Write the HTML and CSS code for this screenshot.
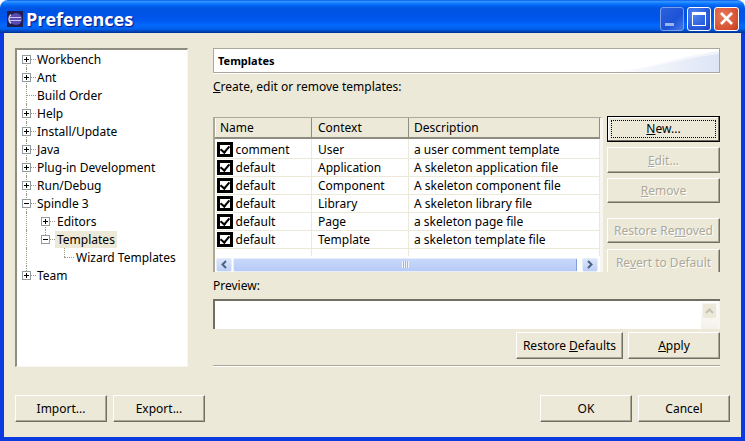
FILE: index.html
```html
<!DOCTYPE html>
<html>
<head>
    <title>Preferences</title>
    <link rel="stylesheet" href="styles.css">
</head>
<body>
    <div class="window">
        <div class="titlebar">
            <svg class="app-icon" width="16" height="16" viewBox="0 0 16 16">
                <rect width="16" height="16" fill="#231c4e"/>
                <circle cx="9" cy="8" r="6" fill="#5a4cb0"/>
                <path d="M4 3.500a6 6 0 0 0 0 9" fill="none" stroke="#d8d0f5" stroke-width="1.500"/>
                <path d="M3 6.500h11M3 9.500h11" stroke="#c9c2f0" stroke-width="1"/>
            </svg>
            <span class="title">Preferences</span>
            <div class="caption-buttons">
                <span class="cap cap-min"><i></i></span>
                <span class="cap cap-max"><i></i></span>
                <span class="cap cap-close">
                    <svg width="15" height="15" viewBox="0 0 15 15"><path d="M2 2l11 11M13 2L2 13" stroke="#fff" stroke-width="2.6"/></svg>
                </span>
            </div>
        </div>

        <div class="content">
            <div class="main">
                <div class="tree">
                    <div class="row"><span class="cell v-first h"><b class="exp plus"></b></span><span class="lbl">Workbench</span></div>
                    <div class="row"><span class="cell v h"><b class="exp plus"></b></span><span class="lbl">Ant</span></div>
                    <div class="row"><span class="cell v h"></span><span class="lbl">Build Order</span></div>
                    <div class="row"><span class="cell v h"><b class="exp plus"></b></span><span class="lbl">Help</span></div>
                    <div class="row"><span class="cell v h"><b class="exp plus"></b></span><span class="lbl">Install/Update</span></div>
                    <div class="row"><span class="cell v h"><b class="exp plus"></b></span><span class="lbl">Java</span></div>
                    <div class="row"><span class="cell v h"><b class="exp plus"></b></span><span class="lbl">Plug-in Development</span></div>
                    <div class="row"><span class="cell v h"><b class="exp plus"></b></span><span class="lbl">Run/Debug</span></div>
                    <div class="row"><span class="cell v h"><b class="exp minus"></b></span><span class="lbl">Spindle 3</span></div>
                    <div class="row"><span class="cell v"></span><span class="cell v-first h"><b class="exp plus"></b></span><span class="lbl lbl-sub">Editors</span></div>
                    <div class="row"><span class="cell v"></span><span class="cell v-last h"><b class="exp minus"></b></span><span class="lbl lbl-sub selected">Templates</span></div>
                    <div class="row"><span class="cell v"></span><span class="cell"></span><span class="cell v-last h"></span><span class="lbl lbl-leaf">Wizard Templates</span></div>
                    <div class="row"><span class="cell v-last h"><b class="exp plus"></b></span><span class="lbl">Team</span></div>
                </div>

                <div class="panel">
                    <div class="panel-title">
                        <svg class="swoosh" width="130" height="23" viewBox="0 0 130 23" preserveAspectRatio="none">
                            <defs>
                                <linearGradient id="fade" x1="0" x2="1" y1="0" y2="0">
                                    <stop offset="0" stop-color="#fff"/>
                                    <stop offset="1" stop-color="#dde5f5"/>
                                </linearGradient>
                                <linearGradient id="fade2" x1="0" x2="1" y1="0" y2="0">
                                    <stop offset="0" stop-color="#fff"/>
                                    <stop offset="1" stop-color="#eef2fa"/>
                                </linearGradient>
                            </defs>
                            <path d="M40 23C70 14 100 6 130 2V23Z" fill="url(#fade2)"/>
                            <path d="M20 23C60 20 95 9 130 5V23Z" fill="url(#fade)"/>
                        </svg>
                        <span>Templates</span>
                    </div>
                    <div class="intro"><u>C</u>reate, edit or remove templates:</div>

                    <div class="table-area">
                        <div class="table-box">
                            <table class="grid">
                                <colgroup>
                                    <col class="col-name">
                                    <col class="col-context">
                                    <col class="col-desc">
                                </colgroup>
                                <thead>
                                    <tr><th>Name</th><th>Context</th><th>Description</th></tr>
                                </thead>
                                <tbody>
                                    <tr><td><div class="name-cell"><span class="check"></span>comment</div></td><td>User</td><td>a user comment template</td></tr>
                                    <tr><td><div class="name-cell"><span class="check"></span>default</div></td><td>Application</td><td>A skeleton application file</td></tr>
                                    <tr><td><div class="name-cell"><span class="check"></span>default</div></td><td>Component</td><td>A skeleton component file</td></tr>
                                    <tr><td><div class="name-cell"><span class="check"></span>default</div></td><td>Library</td><td>A skeleton library file</td></tr>
                                    <tr><td><div class="name-cell"><span class="check"></span>default</div></td><td>Page</td><td>a skeleton page file</td></tr>
                                    <tr><td><div class="name-cell"><span class="check"></span>default</div></td><td>Template</td><td>a skeleton template file</td></tr>
                                    <tr class="empty"><td></td><td></td><td></td></tr>
                                </tbody>
                            </table>
                            <div class="hscroll">
                                <span class="sb-btn">
                                    <svg width="8" height="9" viewBox="0 0 8 9"><path d="M6 1L2.500 4.500 6 8" fill="none" stroke="#4d6185" stroke-width="2"/></svg>
                                </span>
                                <span class="sb-thumb"><i></i></span>
                                <span class="sb-btn">
                                    <svg width="8" height="9" viewBox="0 0 8 9"><path d="M2 1l3.500 3.500L2 8" fill="none" stroke="#4d6185" stroke-width="2"/></svg>
                                </span>
                            </div>
                        </div>
                        <div class="side-buttons">
                            <button class="btn btn-default"><span class="focus"><u>N</u>ew...</span></button>
                            <button class="btn off"><u>E</u>dit...</button>
                            <button class="btn off btn-short btn-gap"><u>R</u>emove</button>
                            <button class="btn off btn-short">Restore Re<u>m</u>oved</button>
                            <button class="btn off btn-last">Re<u>v</u>ert to Default</button>
                        </div>
                    </div>

                    <div class="preview-label">Preview:</div>
                    <div class="preview">
                        <div class="preview-text"></div>
                        <div class="vscroll">
                            <span class="vs-btn">
                                <svg width="9" height="8" viewBox="0 0 9 8"><path d="M1 6l3.500-3.500L8 6" fill="none" stroke="#c5c2b3" stroke-width="2"/></svg>
                            </span>
                        </div>
                    </div>
                    <div class="panel-actions">
                        <button class="btn btn-restore">Restore <u>D</u>efaults</button>
                        <button class="btn btn-apply"><u>A</u>pply</button>
                    </div>
                    <div class="separator"></div>
                </div>
            </div>

            <div class="footer">
                <div class="footer-group">
                    <button class="btn btn-foot">Import...</button>
                    <button class="btn btn-foot">Export...</button>
                </div>
                <div class="footer-group">
                    <button class="btn btn-foot">OK</button>
                    <button class="btn btn-foot">Cancel</button>
                </div>
            </div>
        </div>
    </div>
</body>
</html>
```

FILE: styles.css
```css
* {
    box-sizing: border-box;
}

body {
    margin: 0;
    background-color: #fff;
    font-family: "Noto Sans", "Liberation Sans", sans-serif;
    font-size: 12px;
    color: #000;
}

.window {
    width: 745px;
    height: 441px;
    display: flex;
    flex-direction: column;
    border-radius: 8px 8px 0 0;
    overflow: hidden;
}

/* title bar */
.titlebar {
    height: 33px;
    display: flex;
    align-items: center;
    padding: 4px 6px 0 7px;
    background: linear-gradient(#0058ee 0%, #3593ff 4%, #288eff 7%, #127dff 10%, #036ffc 14%, #0262ee 18%, #0057e5 24%, #0054e3 30%, #0055eb 56%, #005bf5 66%, #026afe 76%, #0062ef 86%, #0052d6 92%, #0040ab 96%, #003092 100%);
}

.app-icon {
    flex: none;
}

.title {
    margin-left: 3px;
    font-family: "Open Sans", "Liberation Sans", sans-serif;
    font-size: 18px;
    font-weight: 700;
    color: #fff;
    text-shadow: 1px 1px 1px #0f1089;
}

.caption-buttons {
    margin-left: auto;
    display: flex;
    gap: 3px;
}

.cap {
    width: 24px;
    height: 24px;
    display: flex;
    align-items: center;
    justify-content: center;
    border: 1px solid #fff;
    border-radius: 3px;
    background: radial-gradient(circle at 30% 30%, #4f86f0, #2455d8 70%, #1c3fc0);
}

.cap-min {
    align-items: flex-end;
    justify-content: flex-start;
    border-color: #7d9fe8;
    background: linear-gradient(135deg, #2c62dc, #1c52d6 60%, #4a7ae6);
}

.cap-min i {
    width: 9px;
    height: 3px;
    margin: 0 0 4px 4px;
    background-color: #9db5ee;
}

.cap-max i {
    width: 14px;
    height: 14px;
    border: 1px solid #fff;
    border-top-width: 3px;
}

.cap-close {
    width: 25px;
    background: radial-gradient(circle at 35% 35%, #e8795a, #d65030 70%, #b83a1e);
}

/* dialog content */
.content {
    flex: 1;
    display: flex;
    flex-direction: column;
    padding: 15px 11px 15px;
    background-color: #ece9d8;
    border-left: 4px solid #0a3be0;
    border-right: 4px solid #0a3be0;
    border-bottom: 4px solid #0a3be0;
}

.main {
    display: flex;
    gap: 25px;
}

/* tree */
.tree {
    width: 173px;
    height: 319px;
    flex: none;
    background-color: #fff;
    border-top: 2px solid #8f8d80;
    border-left: 2px solid #8f8d80;
    border-right: 1px solid #f7f6f0;
    border-bottom: 1px solid #f7f6f0;
}

.row {
    height: 18px;
    display: flex;
    align-items: center;
    white-space: nowrap;
}

.cell {
    position: relative;
    width: 19px;
    height: 18px;
    flex: none;
}

.cell.v::before,
.cell.v-first::before,
.cell.v-last::before {
    content: "";
    position: absolute;
    left: 9px;
    top: 0;
    height: 100%;
    border-left: 1px dotted #9a9886;
}

.cell.v-first::before {
    top: 9px;
    height: 9px;
}

.cell.v-last::before {
    height: 9px;
}

.cell.h::after {
    content: "";
    position: absolute;
    left: 9px;
    top: 9px;
    width: 10px;
    border-top: 1px dotted #9a9886;
}

.exp {
    position: absolute;
    z-index: 1;
    left: 5px;
    top: 5px;
    width: 9px;
    height: 9px;
    border: 1px solid #919b9c;
    background: #fff linear-gradient(to bottom, #000, #000) center / 5px 1px no-repeat;
}

.exp.plus::before {
    content: "";
    position: absolute;
    left: 3px;
    top: 1px;
    width: 1px;
    height: 5px;
    background-color: #000;
}

.lbl {
    padding-left: 1px;
}

.lbl-sub {
    padding: 0 2px 0 2px;
}

.lbl-leaf {
    padding-left: 2px;
}

.selected {
    background-color: #ece9d8;
}

/* right panel */
.panel {
    width: 507px;
    display: flex;
    flex-direction: column;
}

.panel-title {
    position: relative;
    height: 25px;
    display: flex;
    align-items: center;
    padding-left: 4px;
    background-color: #fff;
    border: 1px solid #aca899;
    box-shadow: 0 1px 0 #fff;
    font-weight: 700;
    font-size: 11px;
}

.swoosh {
    position: absolute;
    right: 0;
    top: 0;
}

.panel-title span {
    position: relative;
}

.intro {
    height: 18px;
    margin: 5px 0 21px;
    line-height: 18px;
}

.table-area {
    display: flex;
    gap: 4px;
    height: 155px;
}

.table-box {
    width: 390px;
    display: flex;
    flex-direction: column;
    background-color: #fff;
    border-top: 1px solid #aca899;
    border-left: 2px solid #aca899;
    border-right: 3px solid #f7f6f0;
}

.grid {
    width: 385px;
    border-collapse: collapse;
    table-layout: fixed;
}

.col-name {
    width: 96px;
}

.col-context {
    width: 97px;
}

.grid th {
    height: 20px;
    padding: 0 0 0 5px;
    text-align: left;
    font-weight: 400;
    background-color: #ece9d8;
    border-right: 1px solid #8f8d80;
    border-bottom: 2px solid #8f8d80;
    border-left: 1px solid #fff;
}

.grid td {
    height: 18px;
    padding: 0 0 0 5px;
    white-space: nowrap;
    border-right: 1px solid #ece9d8;
    border-bottom: 1px solid #ece9d8;
}

.grid th:first-child {
    padding-left: 4px;
}

.grid th:nth-child(2),
.grid td:nth-child(2) {
    padding-left: 6px;
}

.grid tbody tr:first-child td {
    height: 20px;
    padding-top: 2px;
}

.grid tr.empty td {
    height: 7px;
    border-bottom: none;
}

.name-cell {
    display: flex;
    align-items: center;
    gap: 3px;
    margin-left: -4px;
}

.check {
    position: relative;
    width: 16px;
    height: 15px;
    flex: none;
    border: 3px solid #000;
    background-color: #fff;
}

.check::after {
    content: "";
    position: absolute;
    left: 2px;
    top: -1px;
    width: 4px;
    height: 7px;
    border-right: 2px solid #000;
    border-bottom: 2px solid #000;
    transform: rotate(40deg);
}

.hscroll {
    margin-top: 2px;
    height: 15px;
    display: flex;
    gap: 1px;
    padding: 0 0 0 1px;
}

.sb-btn {
    width: 16px;
    flex: none;
    display: flex;
    align-items: center;
    justify-content: center;
    background: linear-gradient(#dbe6fb, #bccff6);
    border: 1px solid #e6eefc;
    border-radius: 2px;
}

.sb-thumb {
    width: 344px;
    flex: none;
    display: flex;
    align-items: center;
    justify-content: center;
    background: linear-gradient(#c9d8fa, #b7cbf7);
    border: 1px solid #e6eefc;
    border-right-color: #7f9ddc;
    border-radius: 2px;
    margin-right: 4px;
}

.sb-thumb i {
    width: 7px;
    height: 7px;
    background: repeating-linear-gradient(to right, #eef3fe 0 1px, #9db5ea 1px 2px);
}

/* buttons */
.btn {
    width: 113px;
    height: 26px;
    padding: 0;
    font: inherit;
    color: #000;
    background-color: #ece9d8;
    border: 1px solid;
    border-color: #fff #716f64 #716f64 #fff;
    box-shadow: inset -1px -1px 0 #aca899;
}

.btn.off {
    color: #aca899;
    text-shadow: 1px 1px 0 #fff;
}

.side-buttons {
    display: flex;
    flex-direction: column;
    gap: 5px;
    height: 156px;
    margin-top: -1px;
    overflow: hidden;
    flex: none;
    width: 113px;
}

.side-buttons .btn {
    flex: none;
}

.btn-default {
    padding: 3px;
    border: 1px solid #000;
    box-shadow: inset -1px -1px 0 #716f64, inset 1px 1px 0 #fff;
}

.focus {
    display: block;
    height: 18px;
    line-height: 16px;
    border: 1px dotted #000;
}

.side-buttons .btn-short {
    height: 25px;
}

.btn-gap {
    margin-bottom: 10px;
}

.btn-last {
    margin-top: 1px;
}

/* preview */
.preview-label {
    height: 18px;
    margin: 5px 0 4px;
    line-height: 18px;
}

.preview {
    height: 30px;
    display: flex;
    background-color: #fff;
    border-top: 2px solid #716f64;
    border-left: 2px solid #716f64;
}

.preview-text {
    flex: 1;
}

.vscroll {
    width: 19px;
    background: linear-gradient(#fff, #f3f1e8);
    border-right: 2px solid #f7f6f0;
    padding: 2px 1px;
}

.vs-btn {
    display: flex;
    align-items: center;
    justify-content: center;
    height: 16px;
    background-color: #ece9d8;
    border-radius: 2px;
    box-shadow: inset 0 0 0 1px #f7f6f0;
}

.panel-actions {
    margin-top: 3px;
    display: flex;
    justify-content: flex-end;
    gap: 5px;
}

.btn-restore {
    width: 107px;
    height: 27px;
}

.btn-apply {
    width: 92px;
    height: 27px;
}

.separator {
    height: 2px;
    margin-top: 6px;
    background-color: #aca899;
    border-bottom: 1px solid #fff;
}

/* footer */
.footer {
    margin-top: auto;
    display: flex;
    justify-content: space-between;
}

.footer-group {
    display: flex;
    gap: 6px;
}

.btn-foot {
    width: 92px;
    height: 27px;
}
```
